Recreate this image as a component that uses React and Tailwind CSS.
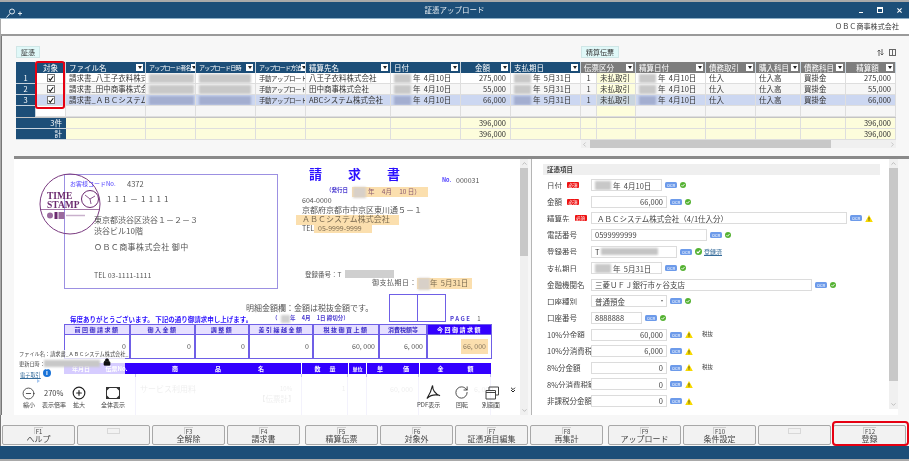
import React from 'react';
import { CircleMinus, CirclePlus, RotateCw, Lock, ChevronsDown, ChevronUp, ChevronDown, ChevronLeft, ChevronRight } from 'lucide-react';

const FilterBtn = () => (
  <span className="ml-auto mr-[2px] flex h-[7px] w-[7px] shrink-0 items-center justify-center bg-white">
    <span className="h-0 w-0 border-x-[2px] border-t-[3px] border-x-transparent border-t-[#222]" />
  </span>
);

const Hd = ({ label, span, gray, tiny, right }) => (
  <div className={`flex items-center overflow-hidden border-r border-[#c8d4de] pl-[3px] whitespace-nowrap text-white ${gray ? 'bg-[#7d7d7d]' : 'bg-[#1c4e78]'} ${span ? 'col-span-2' : ''} ${tiny ? 'text-[6px] tracking-[-0.8px]' : ''}`}>
    <span className={right ? 'ml-auto' : ''}>{label}</span>
    <FilterBtn />
  </div>
);

const Smudge = ({ w, sel }) => (
  <span className={`mr-[2px] inline-block h-[9px] shrink-0 blur-[1px] ${sel ? 'bg-[#a3aed0]' : 'bg-[#c8c8c8]'}`} style={{ width: w }} />
);

const Cell = ({ children, bg, right, center, pl = 'pl-[3px]' }) => (
  <div className={`flex items-center overflow-hidden whitespace-nowrap border-r border-b border-[#dedede] ${bg} ${right ? 'justify-end pr-[4px]' : pl} ${center ? 'justify-center !pl-0' : ''}`}>
    {children}
  </div>
);

const Check = () => (
  <span className="flex h-[8px] w-[8px] items-center justify-center border border-[#777] bg-white">
    <svg viewBox="0 0 8 8" className="h-[7px] w-[7px]"><path d="M1 4l2 2.4L7 1" fill="none" stroke="#111" strokeWidth="1.4" /></svg>
  </span>
);

const rows = [
  { n: '1', file: '請求書_八王子衣料株式', to: '八王子衣料株式会社', amount: '275,000', bg: 'bg-white' },
  { n: '2', file: '請求書_田中商事株式会', to: '田中商事株式会社', amount: '55,000', bg: 'bg-[#f6f6f6]' },
  { n: '3', file: '請求書_ＡＢＣシステム', to: 'ABCシステム株式会社', amount: '66,000', bg: 'bg-[#ccd7f1]', sel: true },
];

const Table = () => (
  <div className="ml-[14px] mt-[4px] grid w-[880px] grid-cols-[20px_30px_80px_50px_60px_50px_85px_70px_50px_70px_16px_39px_70px_50px_45px_45px_50px] grid-rows-[11px_11px_11px_11px_11px_1px_11px_11px] text-[7.5px] leading-none text-[#333]">
    <div className="border-r border-[#c8d4de] bg-[#1c4e78]" />
    <div className="flex items-center justify-center border-r border-[#c8d4de] bg-[#1c4e78] text-white">対象</div>
    <Hd label="ファイル名" />
    <Hd label="アップロード者名" tiny />
    <Hd label="アップロード日時" tiny />
    <Hd label="アップロード方法" tiny />
    <Hd label="精算先名" />
    <Hd label="日付" />
    <Hd label="金額" right />
    <Hd label="支払期日" />
    <Hd label="伝票区分" span gray />
    <Hd label="精算日付" gray />
    <Hd label="債務取引" gray />
    <Hd label="購入科目" gray />
    <Hd label="債務科目" gray />
    <Hd label="精算額" gray right />

    {rows.map((r) => (
      <React.Fragment key={r.n}>
        <div className="flex items-center justify-center border-r border-b border-[#c8d4de] bg-[#1c4e78] text-white">{r.n}</div>
        <Cell bg={r.bg} center><Check /></Cell>
        <Cell bg={r.bg}>{r.file}</Cell>
        <Cell bg={r.bg}><Smudge w={45} sel={r.sel} /></Cell>
        <Cell bg={r.bg}><Smudge w={52} sel={r.sel} /></Cell>
        <Cell bg={r.bg}><span className="text-[6.5px] tracking-[-0.5px]">手動アップロード</span></Cell>
        <Cell bg={r.bg}>{r.to}</Cell>
        <Cell bg={r.bg}><Smudge w={17} sel={r.sel} />年&nbsp;&nbsp;4月10日</Cell>
        <Cell bg={r.bg} right>{r.amount}</Cell>
        <Cell bg={r.bg}><Smudge w={17} sel={r.sel} />年&nbsp;&nbsp;5月31日</Cell>
        <Cell bg={r.bg} center>1</Cell>
        <Cell bg={r.sel ? 'bg-[#c9d5df]' : 'bg-[#fdfddc]'}>未払取引</Cell>
        <Cell bg={r.bg}><Smudge w={17} sel={r.sel} />年&nbsp;&nbsp;4月10日</Cell>
        <Cell bg={r.bg}>仕入</Cell>
        <Cell bg={r.bg}>仕入高</Cell>
        <Cell bg={r.bg}>買掛金</Cell>
        <Cell bg={r.bg} right>{r.amount}</Cell>
      </React.Fragment>
    ))}

    <div className="border-r border-[#c8d4de] bg-[#1c4e78]" />
    {Array.from({ length: 16 }, (_, i) => (
      <Cell key={i} bg={i === 10 ? 'bg-[#fdfddc]' : i === 0 ? 'bg-white' : 'bg-[#f6f6f6]'} />
    ))}

    <div className="col-span-full bg-[#c4c4c4]" />

    {['3件', '計'].map((label) => (
      <React.Fragment key={label}>
        <div className="col-span-2 flex items-center justify-end border-b border-[#c8d4de] bg-[#1c4e78] pr-[4px] text-white">{label}</div>
        {Array.from({ length: 15 }, (_, i) => {
          const money = i === 6 || i === 14;
          return <Cell key={i} bg="bg-[#fdfddc]" right={money}>{money ? '396,000' : null}</Cell>;
        })}
      </React.Fragment>
    ))}
  </div>
);

const Ocr = () => (
  <span className="flex h-[6px] w-[12px] shrink-0 items-center justify-center rounded-[1.5px] bg-[#6d9bea] text-[4px] leading-none text-white">OCR</span>
);

const Ok = ({ big }) => (
  <svg viewBox="0 0 10 10" className={`shrink-0 ${big ? 'h-[7px] w-[7px]' : 'h-[6px] w-[6px]'}`}>
    <circle cx="5" cy="5" r="5" fill="#55b233" />
    <path d="M2.5 5.2l1.8 1.8 3.3-3.6" fill="none" stroke="#fff" strokeWidth="1.5" />
  </svg>
);

const Warn = () => (
  <svg viewBox="0 0 12 11" className="h-[7px] w-[8px] shrink-0">
    <path d="M6 0l6 11H0z" fill="#f7d900" />
    <path d="M6 3.5v4M6 8.4v1.2" stroke="#222" strokeWidth="1.2" />
  </svg>
);

const Req = () => (
  <span className="ml-[5px] flex h-[6px] w-[12px] items-center justify-center rounded-[1px] bg-[#ee1111] text-[4.5px] leading-none text-white">必須</span>
);

const fields = [
  { label: '日付', req: true, w: 'w-[71px]', smudge: true, value: '年  4月10日', ok: true },
  { label: '金額', req: true, w: 'w-[76px]', value: '66,000', right: true, ok: true },
  { label: '精算先', req: true, w: 'w-[256px]', value: 'ＡＢＣシステム株式会社（4/1仕入分）', warn: true, indent: true },
  { label: '電話番号', w: 'w-[116px]', value: '0599999999', ok: true },
  { label: '登録番号', w: 'w-[86px]', value: 'T', wide: true, ok: true, link: true },
  { label: '支払期日', w: 'w-[71px]', smudge: true, value: '年  5月31日', ok: true },
  { label: '金融機関名', w: 'w-[221px]', value: '三菱ＵＦＪ銀行市ヶ谷支店', ok: true },
  { label: '口座種別', w: 'w-[76px]', value: '普通預金', select: true, ok: true },
  { label: '口座番号', w: 'w-[51px]', value: '8888888', ok: true },
  { label: '10%分金額', w: 'w-[76px]', value: '60,000', right: true, warn: true, tax: true },
  { label: '10%分消費税額', w: 'w-[76px]', value: '6,000', right: true, warn: true },
  { label: '8%分金額', w: 'w-[76px]', value: '0', right: true, warn: true, tax: true },
  { label: '8%分消費税額', w: 'w-[76px]', value: '0', right: true, warn: true },
  { label: '非課税分金額', w: 'w-[76px]', value: '0', right: true, warn: true },
];

const FormRow = ({ f }) => (
  <div className="flex h-[16.6px] items-center">
    <div className="flex w-[48px] shrink-0 items-center overflow-hidden whitespace-nowrap pl-[4px]">
      {f.label}
      {f.req && <Req />}
    </div>
    <div className={`flex h-[12px] items-center overflow-hidden whitespace-nowrap border border-[#dcdcdc] bg-white px-[3px] text-[7.5px] ${f.w} ${f.right ? 'justify-end' : ''}`}>
      {f.smudge && <span className="mr-[2px] h-[9px] w-[16px] shrink-0 bg-[#c8c8c8] blur-[1px]" />}
      {f.indent && <span className="w-[2px]" />}
      <span className="whitespace-pre">{f.value}</span>
      {f.wide && <span className="ml-[1px] h-[7px] w-[57px] bg-[#c4c4c4] blur-[1px]" />}
      {f.select && <span className="ml-auto h-0 w-0 border-x-[1.5px] border-t-[2px] border-x-transparent border-t-[#666]" />}
    </div>
    <span className="ml-[3px]"><Ocr /></span>
    <span className="ml-[3px] flex items-center">
      {f.ok && <Ok big={f.link} />}
      {f.warn && <Warn />}
    </span>
    {f.link && <span className="ml-[2px] text-[6px] text-[#336a99] underline">登録済</span>}
    {f.tax && <span className="ml-[9px] text-[5.5px] text-[#444]">税抜</span>}
  </div>
);

const FormPanel = () => (
  <div className="relative ml-[3px] h-[256px] w-[367px] border-l border-[#b5b5b5] bg-white text-[7.5px] leading-none text-[#444]">
    <div className="ml-[11px] mr-[18px] mt-[5px] w-[337px]">
      <div className="flex h-[11px] items-center bg-[#efefef] pl-[4px] text-[6.5px] font-bold">証憑項目</div>
      <div className="mt-[2px]">
        {fields.map((f) => <FormRow key={f.label} f={f} />)}
      </div>
    </div>
    <div className="absolute right-0 top-0 flex h-[250px] w-[9px] flex-col items-center bg-[#f0f0f0]">
      <ChevronUp className="mt-[1px] h-[7px] w-[7px] text-[#999]" />
      <div className="mt-[1px] h-[213px] w-full bg-[#c8c8c8]" />
      <ChevronDown className="mt-auto mb-[1px] h-[7px] w-[7px] text-[#999]" />
    </div>
  </div>
);

const PurpleHead = ({ children, dark }) => (
  <div className={`flex h-[11px] items-center justify-center border-[1.5px] border-[#6f5fe6] text-[6px] font-bold tracking-[1.5px] ${dark ? 'bg-[#3300ff] text-white' : 'bg-[#e6e0ff] text-[#3a2bc4]'}`}>{children}</div>
);

const PurpleBody = ({ children }) => (
  <div className="flex h-[24px] items-center justify-end border-[1.5px] border-t-0 border-[#6f5fe6] pr-[3px] text-[7px] text-[#555]">{children}</div>
);

const Stamp = () => (
  <svg viewBox="0 0 62 62" className="absolute left-[39px] top-[172px] h-[62px] w-[62px]">
    <circle cx="31" cy="31" r="30" fill="none" stroke="#7a3a80" strokeWidth="1" />
    <text x="8" y="26" fontFamily="Liberation Serif, serif" fontWeight="bold" fontSize="9.5" fill="#6b2a6f">TIME</text>
    <text x="8" y="35" fontFamily="Liberation Serif, serif" fontWeight="bold" fontSize="9.5" fill="#6b2a6f">STAMP</text>
    <circle cx="51" cy="26" r="8.5" fill="none" stroke="#6b2a6f" strokeWidth="1" />
    <path d="M51 26l-5-4M51 26l5-3M51 26l1 5" stroke="#6b2a6f" strokeWidth="0.8" />
    <path d="M1 36.5h60" stroke="#7a3a80" strokeWidth="0.7" />
    <circle cx="11" cy="42.5" r="3" fill="#9a6a9e" />
    <rect x="15.5" y="39" width="3" height="7" fill="#6b2a6f" />
    <rect x="19.5" y="39" width="6" height="7" fill="#9a6a9e" />
    <path d="M27 42.5h19" stroke="#c9b0cc" strokeWidth="1.5" />
  </svg>
);

const DocText = ({ className, children }) => (
  <div className={`absolute whitespace-pre leading-none ${className}`}>{children}</div>
);

const DocPanel = () => (
  <div className="relative ml-[12px] h-[256px] w-[514px] overflow-hidden bg-white text-[#555]">
    {/* free canvas: children use page coordinates */}
    <div className="absolute left-[-14px] top-[-158px] h-[461px] w-[909px]">
      <div className="absolute left-[64px] top-[173px] h-[115px] w-[214px] border border-[#9c90e2]" />
      <Stamp />
      <DocText className="left-[70px] top-[180px] text-[6px] text-[#4a3aff]">お客様コードNo.</DocText>
      <DocText className="left-[127px] top-[179px] text-[7.5px]">4372</DocText>
      <DocText className="left-[107px] top-[194px] text-[8px] tracking-[3.2px]">111－1111</DocText>
      <DocText className="left-[94px] top-[215px] text-[8px]">東京都渋谷区渋谷１－２－３</DocText>
      <DocText className="left-[94px] top-[226px] text-[8px]">渋谷ビル10階</DocText>
      <DocText className="left-[94px] top-[242px] text-[8px] tracking-[0.4px]">ＯＢＣ商事株式会社 御中</DocText>
      <DocText className="left-[94px] top-[271px] text-[7px]">TEL 03-1111-1111</DocText>

      <DocText className="left-[309px] top-[166px] text-[13px] font-bold tracking-[26px] text-[#2a10ff]">請求書</DocText>
      <DocText className="left-[326px] top-[187px] text-[5.5px] font-bold text-[#4a3ad0]">（発行日</DocText>
      <div className="absolute left-[352px] top-[186px] h-[10px] w-[76px] bg-[#fbdfae]" />
      <div className="absolute left-[353px] top-[186px] h-[11px] w-[13px] bg-[#d8d0c8] blur-[1px]" />
      <DocText className="left-[368px] top-[187px] text-[6.5px] text-[#8a5a70]">年     4月     10 日）</DocText>
      <DocText className="left-[442px] top-[177px] text-[5.5px] font-bold text-[#4a3aff]">No.</DocText>
      <DocText className="left-[456px] top-[176px] text-[7px]">000031</DocText>
      <DocText className="left-[302px] top-[196px] text-[7px]">604-0000</DocText>
      <DocText className="left-[302px] top-[205px] text-[8px]">京都府京都市中京区東川通５－１</DocText>
      <div className="absolute left-[296px] top-[214px] h-[10px] w-[103px] bg-[#fbdfae]" />
      <DocText className="left-[302px] top-[214px] text-[8px] text-[#7a6a50]">ＡＢＣシステム株式会社</DocText>
      <DocText className="left-[302px] top-[224px] text-[7px]">TEL</DocText>
      <div className="absolute left-[314px] top-[223px] h-[9px] w-[58px] bg-[#fbdfae]" />
      <DocText className="left-[318px] top-[224px] text-[7px] text-[#7a6a50]">05-9999-9999</DocText>
      <DocText className="left-[305px] top-[270px] text-[6.5px]">登録番号：T</DocText>
      <div className="absolute left-[345px] top-[269px] h-[8px] w-[49px] bg-[#cfcfcf] blur-[0.5px]" />
      <DocText className="left-[372px] top-[278px] text-[7px] tracking-[0.5px]">御支払期日：</DocText>
      <div className="absolute left-[417px] top-[277px] h-[11px] w-[55px] bg-[#fbdfae]" />
      <div className="absolute left-[418px] top-[277px] h-[12px] w-[12px] bg-[#d8d0c8] blur-[1px]" />
      <DocText className="left-[430px] top-[278px] text-[7.5px] text-[#7a6a50]">年  5月31日</DocText>

      <div className="absolute left-[389px] top-[293px] h-[28px] w-[29px] border border-[#6f5fe6]" />
      <div className="absolute left-[418px] top-[293px] h-[28px] w-[28px] border border-l-0 border-[#6f5fe6]" />
      <DocText className="left-[246px] top-[303px] text-[8px]">明細金額欄：金額は税抜金額です。</DocText>
      <DocText className="left-[70px] top-[315px] text-[6.5px] font-bold text-[#2a10ff]">毎度ありがとうございます。 下記の通り御請求申し上げます。</DocText>
      <DocText className="left-[272px] top-[315px] text-[5.5px] font-bold text-[#4a3ad0]">（          年     4月     1日 締切分）</DocText>
      <div className="absolute left-[281px] top-[314px] h-[8px] w-[9px] bg-[#d0d0d0] blur-[1px]" />
      <DocText className="left-[450px] top-[315px] text-[6px] font-bold tracking-[1.5px] text-[#4a3ad0]">PAGE  <span className="font-normal text-[#555]">1</span></DocText>

      <div className="absolute left-[64px] top-[323px] grid w-[428px] grid-cols-[66px_65px_54px_64px_66px_48px_65px]">
        <PurpleHead>前回御請求額</PurpleHead>
        <PurpleHead>御入金額</PurpleHead>
        <PurpleHead>調整額</PurpleHead>
        <PurpleHead>差引繰越金額</PurpleHead>
        <PurpleHead>税抜御買上額</PurpleHead>
        <PurpleHead><span className="tracking-[0px]">消費税額等</span></PurpleHead>
        <PurpleHead dark>今回御請求額</PurpleHead>
        <PurpleBody>0</PurpleBody>
        <PurpleBody>0</PurpleBody>
        <PurpleBody>0</PurpleBody>
        <PurpleBody>0</PurpleBody>
        <PurpleBody>60, 000</PurpleBody>
        <PurpleBody>6, 000</PurpleBody>
        <PurpleBody><span className="bg-[#fbdfae] px-[2px] py-[2px] text-[#8a7a60]">66, 000</span></PurpleBody>
      </div>

      <div className="absolute left-[64px] top-[362px] grid h-[11px] w-[427px] grid-cols-[34px_37px_166px_47px_18px_53px_72px] bg-[#3300ff] text-[6px] font-bold text-white">
        <div className="flex items-center justify-center">年月日</div>
        <div className="flex items-center justify-center">伝票No.</div>
        <div className="flex items-center justify-center gap-[37px]"><span>商</span><span>品</span><span>名</span></div>
        <div className="flex items-center justify-center gap-[9px] border-l border-white"><span>数</span><span>量</span></div>
        <div className="flex items-center justify-center border-l border-white text-[5px]">単位</div>
        <div className="flex items-center justify-center gap-[20px] border-l border-white"><span>単</span><span>価</span></div>
        <div className="flex items-center justify-center gap-[24px] border-l border-white"><span>金</span><span>額</span></div>
      </div>
      <div className="absolute left-[135px] top-[373px] h-[41px] w-[356px] border-x border-[#c4bcf2]" />
      <div className="absolute left-[301px] top-[373px] h-[41px] w-[47px] border-x border-[#c4bcf2]" />
      <div className="absolute left-[366px] top-[373px] h-[41px] w-[53px] border-x border-[#c4bcf2]" />
      <DocText className="left-[140px] top-[384px] text-[8px] text-[#aaa]">サービス利用料</DocText>
      <DocText className="left-[258px] top-[394px] text-[7.5px] text-[#aaa]">【伝票計】</DocText>
      <DocText className="left-[280px] top-[385px] text-[6px] text-[#aaa]">10%</DocText>
      <DocText className="left-[342px] top-[385px] text-[6px] text-[#aaa]">1</DocText>
      <DocText className="left-[390px] top-[385px] text-[7px] text-[#aaa]">60, 000</DocText>
      <DocText className="left-[474px] top-[385px] text-[7px] text-[#aaa]">6, 000</DocText>

      {/* viewer overlays */}
      <div className="absolute left-[14px] top-[349px] h-[27px] w-[111px] bg-white/80" />
      <div className="absolute left-[14px] top-[376px] h-[38px] w-[506px] bg-white/80" />

      <DocText className="left-[19px] top-[350px] text-[5.2px] text-[#444]">ファイル名：請求書_ＡＢＣシステム株式会社_</DocText>
      <DocText className="left-[19px] top-[360px] text-[5.2px] text-[#444]">更新日時：</DocText>
      <div className="absolute left-[44px] top-[359px] h-[7px] w-[56px] bg-[#c8c8c8] blur-[1px]" />
      <Lock className="absolute left-[103px] top-[357px] h-[8px] w-[8px] fill-[#111] text-[#111]" />
      <DocText className="left-[20px] top-[371px] text-[5.2px] text-[#336a99] underline">電子取引</DocText>
      <div className="absolute left-[43px] top-[368px] flex h-[8px] w-[8px] items-center justify-center rounded-full bg-[#1a73d8] text-[6px] font-bold leading-none text-white">i</div>
      <div className="absolute left-[37px] top-[378px] h-0 w-0 border-y-[2px] border-l-[3px] border-y-transparent border-l-[#a8c8f0]" />

      <CircleMinus className="absolute left-[22px] top-[386px] h-[13px] w-[13px] text-[#333]" strokeWidth={1.5} />
      <DocText className="left-[44px] top-[388px] text-[7.5px] text-[#444]">270%</DocText>
      <CirclePlus className="absolute left-[72px] top-[385px] h-[14px] w-[14px] text-[#222]" strokeWidth={2} />
      <svg viewBox="0 0 14 12" className="absolute left-[106px] top-[386px] h-[12px] w-[14px]">
        <rect x="0.5" y="0.5" width="13" height="11" fill="none" stroke="#333" />
        <path d="M1 1h2.5L1 3.5zM13 1h-2.5L13 3.5zM1 11h2.5L1 8.5zM13 11h-2.5L13 8.5z" fill="#333" />
      </svg>
      {[['縮小', 'left-[23px]'], ['表示倍率', 'left-[42px]'], ['拡大', 'left-[73px]'], ['全体表示', 'left-[101px]'], ['PDF表示', 'left-[417px]'], ['回転', 'left-[456px]'], ['別画面', 'left-[482px]']].map(([t, cls]) => (
        <DocText key={t} className={`top-[401px] text-[6px] text-[#444] ${cls}`}>{t}</DocText>
      ))}
      <svg viewBox="0 0 16 16" className="absolute left-[426px] top-[384px] h-[15px] w-[15px]">
        <path d="M7 .5C6 5 4 10 1 14.5M7 .5c0 5 3 9 8 11M1.5 14c3-3 8-4 13-3" fill="none" stroke="#222" strokeWidth="1.2" />
      </svg>
      <RotateCw className="absolute left-[454px] top-[384px] h-[15px] w-[15px] text-[#333]" strokeWidth={1.4} />
      <svg viewBox="0 0 14 14" className="absolute left-[485px] top-[385px] h-[14px] w-[14px]">
        <path d="M4 4V1h9.5v8H10M1 4.5h9.5V13H1zM1 6.5h9.5" fill="none" stroke="#444" />
      </svg>
      <ChevronsDown className="absolute left-[509px] top-[385px] h-[8px] w-[8px] text-[#222]" strokeWidth={3} />

      <div className="absolute left-[520px] top-[158px] flex h-[256px] w-[8px] flex-col items-center bg-[#f0f0f0]">
        <ChevronUp className="mt-[1px] h-[7px] w-[7px] text-[#999]" />
        <div className="mt-[1px] h-[88px] w-full bg-[#c8c8c8]" />
        <ChevronDown className="mb-[1px] mt-auto h-[7px] w-[7px] text-[#999]" />
      </div>
    </div>
  </div>
);

const FKey = ({ k, label }) => (
  <div className="flex h-[20px] w-[73px] shrink-0 flex-col items-center rounded-[2px] border border-[#a8a8a8] bg-[#f2f2f2] text-[#444]">
    {k ? (
      <span className="mt-[1px] h-[7px] border-l border-t border-[#cfcfcf] px-[1px] text-[6px] leading-[7px]">{k}</span>
    ) : (
      <span className="mt-[2px] h-[6px] w-[13px] border border-[#d8d8d8]" />
    )}
    {label && <span className="mt-[1px] text-[8px] leading-[8px]">{label}</span>}
  </div>
);

const App = () => (
  <div className="relative flex h-[461px] w-[909px] flex-col overflow-hidden bg-[#a9a9a9] pt-[2px] font-['Noto_Sans_CJK_JP','Noto_Sans',sans-serif] text-[#333] blur-[0.3px]">
    <div className="relative flex h-[17px] shrink-0 items-center justify-center border-b border-[#8fb0c8] bg-[#1c4e78] text-[7.5px] text-[#e8eef3]">
      <svg viewBox="0 0 17 10" className="absolute left-[5px] top-[6px] h-[10px] w-[17px]">
        <circle cx="7" cy="3.5" r="2.5" fill="none" stroke="#dfe8ef" strokeWidth="1" />
        <path d="M5 5.5L1.5 9.5M13 5.5h4M15 3.5v4" stroke="#dfe8ef" strokeWidth="1" />
      </svg>
      証憑アップロード
      <div className="absolute right-[7px] top-[5px] flex items-center gap-[14px] text-white">
        <span className="mt-[4px] h-[1px] w-[4px] bg-white" />
        <span className="h-[6px] w-[6px] border border-t-2 border-white" />
        <svg viewBox="0 0 6 6" className="h-[5px] w-[5px]"><path d="M.5 .5l5 5M5.5 .5l-5 5" stroke="#fff" strokeWidth="1.3" /></svg>
      </div>
    </div>

    <div className="ml-[1px] flex h-[17px] shrink-0 items-center justify-end border-b-[2px] border-[#9a9a9a] bg-white pr-[10px] text-[7px] tracking-[0.1px] text-[#333]">
      ＯＢＣ商事株式会社
    </div>

    <div className="ml-[1px] flex flex-1 flex-col border-l border-[#777] bg-[#f7f7f7]">
      <div className="ml-[14px] mt-[10px] flex h-[12px] w-[880px] items-center text-[7px]">
        <div className="flex h-[12px] w-[24px] items-center justify-center border border-[#cfe6e6] bg-[#e0f8f8]">証憑</div>
        <div className="ml-[541px] flex h-[12px] w-[38px] items-center justify-center border border-[#cfe6e6] bg-[#e0f8f8]">精算伝票</div>
        <div className="ml-auto flex items-center gap-[5px]">
          <svg viewBox="0 0 7 7" className="h-[7px] w-[7px]">
            <path d="M2 7V1M.5 2.5L2 1l1.5 1.5M5 0v6M3.5 4.5L5 6l1.5-1.5" fill="none" stroke="#555" strokeWidth="0.9" />
          </svg>
          <span className="flex h-[7px] w-[7px] border border-[#666]"><span className="w-[3px] border-r border-[#666]" /></span>
        </div>
      </div>
      <Table />
      <div className="ml-[579px] flex h-[8px] w-[315px] items-center bg-[#f0f0f0] text-[#aaa]">
        <ChevronLeft className="h-[7px] w-[7px] shrink-0" />
        <span className="ml-[2px] h-full w-[241px] bg-[#c8c8c8]" />
        <ChevronRight className="ml-auto h-[7px] w-[7px] shrink-0" />
      </div>
      <div className="ml-[12px] mt-[8px] h-[3px] shrink-0 bg-[#8a8a8a]" />
      <div className="flex">
        <DocPanel />
        <FormPanel />
      </div>
    </div>

    <div className="flex h-[31px] shrink-0 items-end border-l border-[#777] bg-[#f7f7f7] pb-[1px]">
      <div className="ml-[1px] flex gap-[2px]">
        <FKey k="F1" label="ヘルプ" />
        <FKey />
        <FKey k="F3" label="全解除" />
        <FKey k="F4" label="請求書" />
      </div>
      <div className="ml-[5px] flex gap-[2px]">
        <FKey k="F5" label="精算伝票" />
        <FKey k="F6" label="対象外" />
        <FKey k="F7" label="証憑項目編集" />
        <FKey k="F8" label="再集計" />
      </div>
      <div className="ml-[5px] flex gap-[2px]">
        <FKey k="F9" label="アップロード" />
        <FKey k="F10" label="条件設定" />
        <FKey />
        <FKey k="F12" label="登録" />
      </div>
    </div>

    <div className="h-[13px] shrink-0 bg-[#1c4e78]" />
    <div className="h-[3px] shrink-0" />

    {/* red callouts */}
    <div className="absolute left-[35px] top-[61px] h-[48px] w-[30px] rounded-[3px] border-[2.5px] border-[#e60012]" />
    <div className="absolute left-[832px] top-[421px] h-[25px] w-[77px] rounded-[4px] border-[2.5px] border-[#e60012]" />
  </div>
);

export default App;
